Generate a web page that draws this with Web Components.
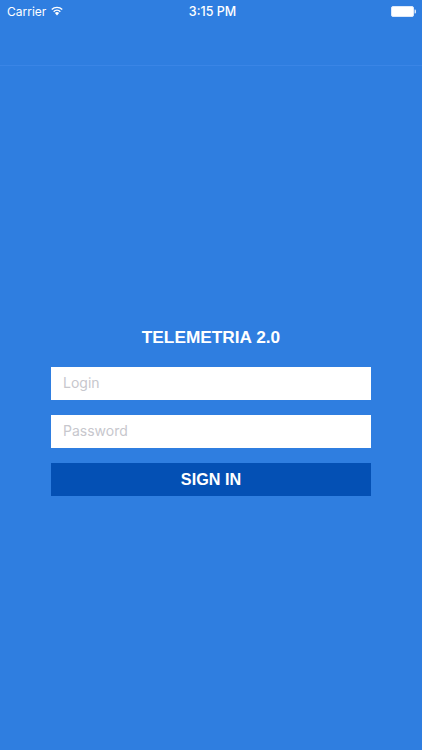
<!DOCTYPE html>
<html lang="en">
<head>
<meta charset="UTF-8">
<title>Telemetria</title>
<style>
  html, body { margin: 0; padding: 0; height: 100%; background: #2f7ee0; }
  body { font-family: "Liberation Sans", Arial, sans-serif; overflow: hidden; }
</style>
</head>
<body>
<template id="statusBarTpl">
  <style>
    :host {
      display: flex;
      align-items: center;
      justify-content: space-between;
      height: 22px;
      padding: 0 6px 0 7px;
      color: #fff;
      font: 12px "Inter", "Liberation Sans", sans-serif;
    }
    .left { display: flex; align-items: center; gap: 5px; flex: 1; }
    .time { font-size: 12.5px; font-weight: 500; margin-left: 2px; }
    .right { flex: 1; display: flex; justify-content: flex-end; }
    svg { display: block; }
  </style>
  <div class="left">
    <span>Carrier</span>
    <svg width="12" height="10" viewBox="0 0 13 10">
      <path d="M6.5 10 4.2 7.3a3.3 3.3 0 0 1 4.6 0Z" fill="#fff"/>
      <path d="M2.9 5.7a5.2 5.2 0 0 1 7.2 0" fill="none" stroke="#fff" stroke-width="1.5"/>
      <path d="M.8 3.4a8.2 8.2 0 0 1 11.4 0" fill="none" stroke="#fff" stroke-width="1.5"/>
    </svg>
  </div>
  <span class="time">3:15 PM</span>
  <div class="right">
    <svg width="25" height="11" viewBox="0 0 25 11">
      <rect x=".5" y=".5" width="22" height="10" rx="1.5" fill="#fff" stroke="#dbe8fa"/>
      <path d="M23.5 3.5h.5a1 1 0 0 1 1 1v2a1 1 0 0 1-1 1h-.5Z" fill="#dbe8fa"/>
    </svg>
  </div>
</template>

<template id="navBarTpl">
  <style>
    :host {
      display: block;
      height: 44px;
      box-sizing: border-box;
      border-bottom: 1px solid #3a85e6;
    }
  </style>
</template>

<template id="loginFieldTpl">
  <style>
    :host { display: block; }
    input {
      display: block;
      width: 100%;
      height: 33px;
      box-sizing: border-box;
      border: none;
      outline: none;
      padding: 0 12px 2px;
      background: #fff;
      color: #333;
      font: 14px "Inter", "Liberation Sans", sans-serif;
    }
    input::placeholder { color: #c7c7cd; opacity: 1; }
  </style>
  <input type="text">
</template>

<template id="loginButtonTpl">
  <style>
    :host { display: block; }
    button {
      display: block;
      width: 100%;
      height: 33px;
      border: none;
      outline: none;
      padding: 0;
      background: #0450b4;
      color: #fff;
      font: bold 16.2px "Liberation Sans", Arial, sans-serif;
    }
  </style>
  <button><slot></slot></button>
</template>

<template id="loginFormTpl">
  <style>
    :host {
      display: flex;
      flex-direction: column;
      gap: 15px;
      width: 320px;
      margin: 0 auto;
    }
    .title {
      margin: 0 0 5px;
      height: 20px;
      text-align: center;
      color: #fff;
      font: bold 17.25px/20px "Liberation Sans", Arial, sans-serif;
    }
  </style>
  <div class="title"><slot name="title"></slot></div>
  <slot></slot>
</template>

<template id="loginScreenTpl">
  <style>
    :host {
      display: block;
      height: 750px;
      background: #2f7ee0;
    }
    .content { padding-top: 261px; }
  </style>
  <status-bar></status-bar>
  <nav-bar></nav-bar>
  <div class="content"><slot></slot></div>
</template>

<login-screen>
  <login-form>
    <span slot="title">TELEMETRIA 2.0</span>
    <login-field placeholder="Login"></login-field>
    <login-field placeholder="Password" type="password"></login-field>
    <login-button>SIGN IN</login-button>
  </login-form>
</login-screen>

<script>
  class TemplateElement extends HTMLElement {
    constructor(tplId) {
      super();
      this._shadowRoot = this.attachShadow({ mode: 'open' });
      const tpl = document.querySelector(tplId);
      this._shadowRoot.appendChild(document.importNode(tpl.content, true));
    }
  }
  class StatusBar extends TemplateElement { constructor() { super('#statusBarTpl'); } }
  class NavBar extends TemplateElement { constructor() { super('#navBarTpl'); } }
  class LoginForm extends TemplateElement { constructor() { super('#loginFormTpl'); } }
  class LoginButton extends TemplateElement { constructor() { super('#loginButtonTpl'); } }
  class LoginScreen extends TemplateElement { constructor() { super('#loginScreenTpl'); } }
  class LoginField extends TemplateElement {
    constructor() { super('#loginFieldTpl'); }
    connectedCallback() {
      const input = this._shadowRoot.querySelector('input');
      input.placeholder = this.getAttribute('placeholder') || '';
      input.type = this.getAttribute('type') || 'text';
    }
  }
  customElements.define('status-bar', StatusBar);
  customElements.define('nav-bar', NavBar);
  customElements.define('login-form', LoginForm);
  customElements.define('login-button', LoginButton);
  customElements.define('login-field', LoginField);
  customElements.define('login-screen', LoginScreen);
</script>
</body>
</html>
